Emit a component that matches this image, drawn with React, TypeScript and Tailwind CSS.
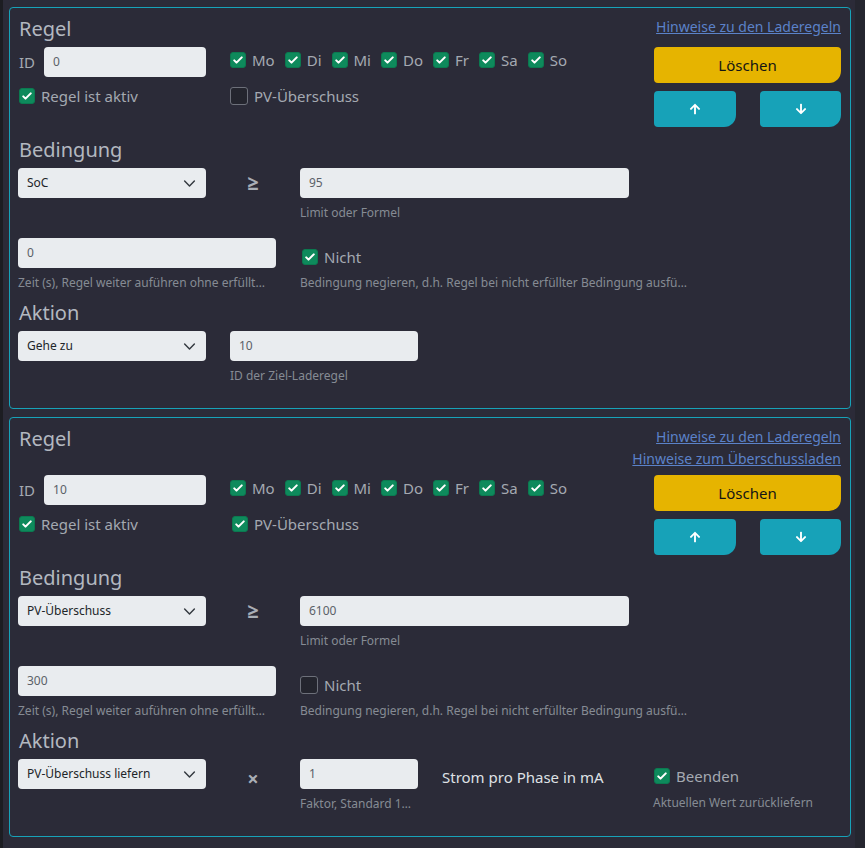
import { FaArrowUp, FaArrowDown } from "react-icons/fa";

const days = ["Mo", "Di", "Mi", "Do", "Fr", "Sa", "So"];

function Box({ checked }: { checked: boolean }) {
  if (!checked)
    return <span className="block h-[18px] w-[18px] shrink-0 rounded-[3px] border border-[#6d707a] bg-[#24252e]" />;
  return (
    <span className="flex h-4 w-4 shrink-0 items-center justify-center rounded-[3px] border border-[#0b7a50] bg-[#0e8a5c]">
      <svg viewBox="0 0 16 16" className="h-[12px] w-[12px]">
        <path d="M3 8.5l3 3 7-7" stroke="white" strokeWidth="2.8" fill="none" strokeLinecap="round" strokeLinejoin="round" />
      </svg>
    </span>
  );
}

function CheckLabel({ checked, label, className = "" }: { checked: boolean; label: string; className?: string }) {
  return (
    <label className={`flex items-center gap-[6px] text-[15px] text-[#a4a9b1] ${className}`}>
      <Box checked={checked} />
      <span>{label}</span>
    </label>
  );
}

function Input({ value, className = "" }: { value: string; className?: string }) {
  return (
    <div className={`flex h-[30px] items-center rounded-[4px] bg-[#e9ecef] px-[9px] text-[12px] text-[#5b6168] ${className}`}>
      {value}
    </div>
  );
}

function Select({ value }: { value: string }) {
  return (
    <div className="flex h-[30px] w-[188px] shrink-0 items-center justify-between rounded-[4px] bg-[#e9ecef] pl-[9px] pr-[10px] text-[12px] text-[#212529]">
      <span>{value}</span>
      <svg viewBox="0 0 16 16" className="h-[13px] w-[13px]">
        <path d="M2 5l6 6 6-6" stroke="#343a40" strokeWidth="1.8" fill="none" strokeLinecap="round" strokeLinejoin="round" />
      </svg>
    </div>
  );
}

function Caption({ children }: { children: React.ReactNode }) {
  return <div className="mt-[6px] whitespace-nowrap text-[12px] leading-[18px] text-[#868b94]">{children}</div>;
}

function Heading({ children, className = "" }: { children: React.ReactNode; className?: string }) {
  return <h2 className={`text-[20px] leading-[24px] text-[#b3b8c0] ${className}`}>{children}</h2>;
}

type RuleProps = {
  id: string;
  pv: boolean;
  surplusLink: boolean;
  condition: string;
  limit: string;
  time: string;
  negate: boolean;
  action: "goto" | "surplus";
};

function RuleCard(r: RuleProps) {
  return (
    <section className="rounded-[4px] border border-[#17a2b8] pb-[23px] pl-2 pr-[9px] pt-2">
      <div className={`flex items-start justify-between ${r.surplusLink ? "mb-[5px]" : "mb-[6px]"}`}>
        <Heading className="mt-[1px] pl-px">Regel</Heading>
        <div className="flex flex-col items-end text-[14px] leading-[22px] text-[#5b82c9]">
          <a className="underline">Hinweise zu den Laderegeln</a>
          {r.surplusLink && <a className="underline">Hinweise zum Überschussladen</a>}
        </div>
      </div>

      <div className="flex items-start justify-between">
        <div className="flex flex-col gap-[8px]">
          <div className="flex items-center gap-[24px]">
            <div className="flex w-[188px] items-center gap-[9px] pl-px text-[15px] text-[#a4a9b1]">
              <span>ID</span>
              <Input value={r.id} className="h-[28px] w-[165px]" />
            </div>
            <div className="flex items-center gap-[10px] pb-[4px]">
              {days.map((d) => (
                <CheckLabel key={d} checked label={d} />
              ))}
            </div>
          </div>
          <div className="flex items-center gap-[24px]">
            <CheckLabel checked label="Regel ist aktiv" className="w-[188px] pl-px" />
            <CheckLabel checked={r.pv} label="PV-Überschuss" className={r.pv ? "pl-[2px]" : ""} />
          </div>
        </div>
        <div className="flex w-[187px] flex-col gap-2">
          <button className="h-[36px] rounded-[4px] rounded-br-[12px] bg-[#e6b400] text-[15px] text-[#141414]">Löschen</button>
          <div className="flex justify-between">
            <button className="flex h-[36px] w-[82px] items-center justify-center rounded-[4px] rounded-br-[12px] bg-[#17a2b8] text-white">
              <FaArrowUp size={12} />
            </button>
            <button className="flex h-[36px] w-[81px] items-center justify-center rounded-[4px] rounded-br-[12px] bg-[#17a2b8] text-white">
              <FaArrowDown size={12} />
            </button>
          </div>
        </div>
      </div>

      <Heading className="mt-[11px] pl-px">Bedingung</Heading>
      <div className="mt-[6px] flex items-start gap-[24px]">
        <Select value={r.condition} />
        <div className="flex h-[30px] w-[46px] items-center justify-center text-[20px] font-bold text-[#a9aeb6]">≥</div>
        <div className="w-[329px]">
          <Input value={r.limit} />
          <Caption>Limit oder Formel</Caption>
        </div>
      </div>

      <div className="mt-[16px] flex items-start gap-[24px]">
        <div className="w-[258px]">
          <Input value={r.time} />
          <Caption>Zeit (s), Regel weiter auführen ohne erfüllt…</Caption>
        </div>
        <div>
          <div className="flex h-[30px] items-center pt-[8px]">
            <CheckLabel checked={r.negate} label="Nicht" className={r.negate ? "pl-[2px]" : ""} />
          </div>
          <Caption>Bedingung negieren, d.h. Regel bei nicht erfüllter Bedingung ausfü…</Caption>
        </div>
      </div>

      <Heading className="mt-[9px] pl-px">Aktion</Heading>
      {r.action === "goto" ? (
        <div className="mt-[6px] flex items-start gap-[24px]">
          <Select value="Gehe zu" />
          <div className="w-[188px]">
            <Input value="10" />
            <Caption>ID der Ziel-Laderegel</Caption>
          </div>
        </div>
      ) : (
        <div className="mt-[6px] flex items-start gap-[24px]">
          <Select value="PV-Überschuss liefern" />
          <div className="flex h-[36px] w-[46px] items-center justify-center pt-[4px] text-[20px] font-bold text-[#a9aeb6]">×</div>
          <div className="w-[118px]">
            <Input value="1" />
            <Caption>Faktor, Standard 1…</Caption>
          </div>
          <div className="flex h-[36px] w-[187px] items-center text-[15px] text-[#dfe1e5]">Strom pro Phase in mA</div>
          <div className="pt-[6px]">
            <CheckLabel checked label="Beenden" className="pl-px" />
            <Caption>Aktuellen Wert zurückliefern</Caption>
          </div>
        </div>
      )}
    </section>
  );
}

export default function App() {
  return (
    <div className="flex min-h-[848px] w-full bg-[#2b2b38]" style={{ fontFamily: '"Noto Sans", "Open Sans", sans-serif' }}>
      <div className="w-[3px] shrink-0 bg-[#1c1d22]" />
      <main className="flex flex-1 flex-col gap-2 pl-[6px] pr-[4px] pt-[7px]">
        <RuleCard id="0" pv={false} surplusLink={false} condition="SoC" limit="95" time="0" negate action="goto" />
        <RuleCard id="10" pv surplusLink condition="PV-Überschuss" limit="6100" time="300" negate={false} action="surplus" />
      </main>
      <div className="w-[10px] shrink-0 bg-[#25262f]" />
    </div>
  );
}
